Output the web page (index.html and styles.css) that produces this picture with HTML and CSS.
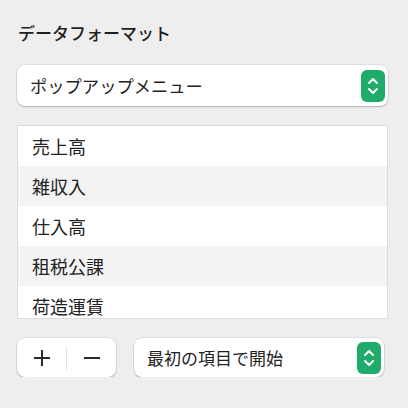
FILE: index.html
```html
<!DOCTYPE html>
<html lang="ja">
<head>
<meta charset="UTF-8">
<meta name="viewport" content="width=device-width, initial-scale=1.0">
<title>データフォーマット</title>
<link rel="stylesheet" href="styles.css">
</head>
<body>

<div id="panel">
  <h2 class="title">データフォーマット</h2>

  <div class="popup">
    <span class="popup-label">ポップアップメニュー</span>
    <span class="stepper">
      <svg width="14" height="22" viewBox="0 0 14 22">
        <path d="M3 8 L7 4 L11 8" fill="none" stroke="#fff" stroke-width="2" stroke-linecap="round" stroke-linejoin="round"/>
        <path d="M3 14 L7 18 L11 14" fill="none" stroke="#fff" stroke-width="2" stroke-linecap="round" stroke-linejoin="round"/>
      </svg>
    </span>
  </div>

  <div id="list">
    <div class="row">売上高</div>
    <div class="row">雑収入</div>
    <div class="row">仕入高</div>
    <div class="row">租税公課</div>
    <div class="row">荷造運賃</div>
  </div>

  <div class="bottom-row">
    <div class="segment">
      <button class="seg-btn">
        <svg width="18" height="18" viewBox="0 0 18 18"><path d="M9 1 V17 M1 9 H17" stroke="#2b2b2b" stroke-width="2"/></svg>
      </button>
      <span class="seg-divider"></span>
      <button class="seg-btn">
        <svg width="18" height="18" viewBox="0 0 18 18"><path d="M1 9 H17" stroke="#2b2b2b" stroke-width="2"/></svg>
      </button>
    </div>
    <div class="popup popup-small">
      <span class="popup-label small">最初の項目で開始</span>
      <span class="stepper">
        <svg width="14" height="22" viewBox="0 0 14 22">
          <path d="M3 8 L7 4 L11 8" fill="none" stroke="#fff" stroke-width="2" stroke-linecap="round" stroke-linejoin="round"/>
          <path d="M3 14 L7 18 L11 14" fill="none" stroke="#fff" stroke-width="2" stroke-linecap="round" stroke-linejoin="round"/>
        </svg>
      </span>
    </div>
  </div>
</div>

</body>
</html>
```

FILE: styles.css
```css
body {
  margin: 0;
  background-color: #efeeee;
  font-family: "Noto Sans CJK JP", "Noto Sans", sans-serif;
  color: #222;
}
#panel {
  display: flex;
  flex-direction: column;
  padding: 21px 20px 0 17px;
}
.title {
  margin: 0 0 20px 1px;
  font-size: 17px;
  line-height: 24px;
  font-weight: 500;
  color: #1f1f1f;
}
.popup {
  display: flex;
  align-items: center;
  justify-content: space-between;
  height: 41px;
  padding: 0 3px 0 13px;
  box-sizing: border-box;
  background-color: #fff;
  border-radius: 8px;
  box-shadow: 0 0 0 0.5px rgba(0,0,0,0.12), 0 1px 1.5px rgba(0,0,0,0.22);
}
.popup-label {
  font-size: 17.3px;
}
.popup-label.small {
  font-size: 17px;
}
.stepper {
  display: flex;
  align-items: center;
  justify-content: center;
  width: 24px;
  height: 32px;
  border-radius: 6px;
  background-color: #1fab69;
}
#list {
  margin-top: 19px;
  height: 192px;
  overflow: hidden;
  border: 1px solid #dedddd;
  background-color: #fff;
}
.row {
  height: 40px;
  flex-shrink: 0;
  padding-left: 14px;
  font-size: 18px;
  line-height: 40px;
}
.row:nth-child(even) {
  background-color: #f3f3f3;
}
.bottom-row {
  display: flex;
  gap: 18px;
  margin-top: 19px;
  margin-right: 4px;
}
.segment {
  display: flex;
  align-items: center;
  width: 99px;
  height: 39px;
  background-color: #fff;
  border-radius: 8px;
  box-shadow: 0 0 0 0.5px rgba(0,0,0,0.12), 0 1px 1.5px rgba(0,0,0,0.22);
}
.seg-btn {
  flex: 1;
  display: flex;
  align-items: center;
  justify-content: center;
  height: 100%;
  padding: 0;
  border: none;
  background: none;
}
.seg-divider {
  width: 1px;
  height: 24px;
  background-color: #e3e3e3;
}
.popup-small {
  flex: 1;
  height: 39px;
}
```
